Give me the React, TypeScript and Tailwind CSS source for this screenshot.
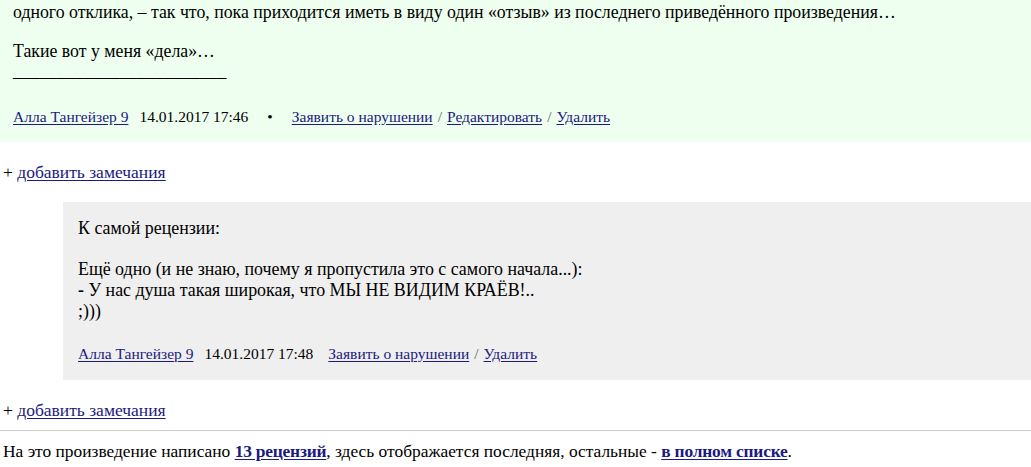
import React from "react";

const link = "text-[#1a1a80] underline underline-offset-2";

export default function App() {
  return (
    <div className="w-[1031px] h-[467px] overflow-hidden bg-white text-black [font-family:'Liberation_Serif','Times_New_Roman',serif]">
      <div className="bg-[#efffef] pl-[13px] pt-[3px] pb-[16px]">
        <div className="text-[17.8px] leading-[19.5px]">
          <p>одного отклика, – так что, пока приходится иметь в виду один «отзыв» из последнего приведённого произведения…</p>
          <p className="mt-[19.5px]">Такие вот у меня «дела»…</p>
          <p>________________________</p>
        </div>
        <div className="mt-[27px] text-[15.5px] leading-[18px] flex items-baseline whitespace-nowrap">
          <a className={link}>Алла Тангейзер 9</a>
          <span className="ml-[11px]">14.01.2017 17:46</span>
          <span className="ml-[19px]">•</span>
          <a className={`${link} ml-[19px]`}>Заявить о нарушении</a>
          <span className="mx-[5px] text-[#666]">/</span>
          <a className={link}>Редактировать</a>
          <span className="mx-[5px] text-[#666]">/</span>
          <a className={link}>Удалить</a>
        </div>
      </div>

      <div className="pl-[3px] pt-[20px] text-[17.5px] leading-[20px]">
        + <a className={link}>добавить замечания</a>
      </div>

      <div className="ml-[63px] mt-[20px] bg-[#efefef] pl-[15px] pt-[16px] pb-[17px]">
        <div className="text-[17.9px] leading-[20.7px]">
          <p>К самой рецензии:</p>
          <p className="mt-[20.7px]">Ещё одно (и не знаю, почему я пропустила это с самого начала...):</p>
          <p><b>-</b> У нас душа такая широкая, что МЫ НЕ ВИДИМ КРАЁВ!..</p>
          <p>;)))</p>
        </div>
        <div className="mt-[23px] text-[15.5px] leading-[18px] flex items-baseline whitespace-nowrap">
          <a className={link}>Алла Тангейзер 9</a>
          <span className="ml-[11px]">14.01.2017 17:48</span>
          <a className={`${link} ml-[15px]`}>Заявить о нарушении</a>
          <span className="mx-[5px] text-[#666]">/</span>
          <a className={link}>Удалить</a>
        </div>
      </div>

      <div className="pl-[3px] pt-[20px] pb-[10px] text-[17.5px] leading-[20px]">
        + <a className={link}>добавить замечания</a>
      </div>
      <hr className="border-0 border-t border-[#cccccc]" />
      <div className="pl-[3px] pt-[10px] text-[17.4px] leading-[20px]">
        На это произведение написано <a className={`${link} font-bold tracking-[-0.2px]`}>13 рецензий</a>, здесь отображается последняя, остальные - <a className={`${link} font-bold tracking-[-0.2px]`}>в полном списке</a>.
      </div>
    </div>
  );
}
